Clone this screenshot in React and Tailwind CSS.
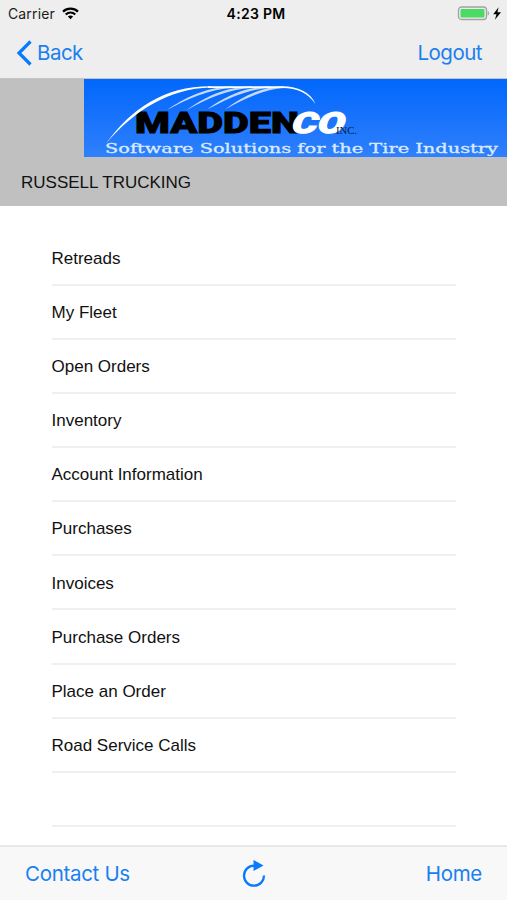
import React from 'react';

// menu entries, the last one is an empty row
const menuItems = [
  'Retreads',
  'My Fleet',
  'Open Orders',
  'Inventory',
  'Account Information',
  'Purchases',
  'Invoices',
  'Purchase Orders',
  'Place an Order',
  'Road Service Calls',
  '',
];

// Phone status bar: carrier, time and battery
const StatusBar = () => {
  return (
    <div className="grid h-[27px] grid-cols-3 items-center pl-2 pr-[5px] text-[14px] text-[#1c1c1c]">
      <div className="flex items-center">
        <span className="w-[47px] whitespace-nowrap tracking-[0.01em]">Carrier</span>
        <svg className="ml-[7px]" width="17" height="13" viewBox="0 0 17 13" fill="none" stroke="#000" strokeWidth="2.2">
          <path d="M1 4.6C5.2 .6 11.8 .6 16 4.6" />
          <path d="M3.7 7.5C6.5 5 10.5 5 13.3 7.5" />
          <path d="M5.9 9.5C7.4 8.2 9.6 8.2 11.1 9.5L8.5 12.2Z" fill="#000" stroke="none" />
        </svg>
      </div>
      <span className="justify-self-center whitespace-nowrap pl-[2px] font-semibold tracking-[0.02em] text-black">4:23 PM</span>
      <svg className="justify-self-end" width="45" height="15" viewBox="0 0 45 15">
        <rect x="1.5" y="1" width="28" height="12.5" rx="3" fill="none" stroke="#a3a3a3" strokeWidth="1.3" />
        <rect x="3.5" y="3" width="24" height="8.5" rx="1" fill="#4cd964" />
        <path d="M30.7 5c1.8.6 1.8 4 0 4.6Z" fill="#a3a3a3" />
        <path d="M41.6 1.2L36.2 8.2h3.3l-1.6 5.6L44 6.2h-3.6Z" fill="#000" />
      </svg>
    </div>
  );
};

// Company banner
const Logo = () => {
  return (
    <svg className="block" width="423" height="78" viewBox="84 79 423 78">
      <defs>
        <linearGradient id="sky" x1="0" y1="0" x2="0" y2="1">
          <stop offset="0" stopColor="#0068fc" />
          <stop offset="0.35" stopColor="#126ffc" />
          <stop offset="1" stopColor="#2f80fb" />
        </linearGradient>
      </defs>
      <rect x="84" y="79" width="423" height="78" fill="url(#sky)" />
      <text x="135" y="133.2" textLength="164" lengthAdjust="spacingAndGlyphs" fontFamily="Roboto" fontWeight="900" fontSize="29" fill="#000" stroke="#000" strokeWidth="0.9">MADDEN</text>
      {/* tire arcs */}
      <g fill="#fff">
        <path d="M106 143.5C131 109 164 86 211 86.2L211 87.6C168 88.5 133 112 106 143.5Z" />
        <path d="M167 110C184 98 207 86.5 233 86.2V88C210 89 187 99 167 110Z" opacity="0.75" />
        <path d="M186 110.5C203 98 225 86.5 252 86.2V88C229 89 206 99 186 110.5Z" opacity="0.75" />
        <path d="M207 109.5C224 97 244 86.5 270 86.2V88C248 89 227 99 207 109.5Z" opacity="0.75" />
        <path d="M225 109.5C242 97 261 86.5 284 86.2V88C266 89 245 98 225 109.5Z" opacity="0.75" />
        <path d="M208 86.3H282C299 86.3 311 93 315.5 104C308 93 298 88 282 87.9H208Z" />
      </g>
      <g transform="translate(291 133.3) skewX(-8)">
        <text x="0" y="0" textLength="53" lengthAdjust="spacingAndGlyphs" fontFamily="Roboto" fontWeight="900" fontStyle="italic" fontSize="29" fill="#fff" stroke="#fff" strokeWidth="1">CO</text>
      </g>
      <text x="336" y="133.7" textLength="21" lengthAdjust="spacingAndGlyphs" fontFamily="Liberation Serif" fontSize="10" fill="#0a1c40">INC.</text>
      <text x="105" y="153" textLength="393" lengthAdjust="spacingAndGlyphs" fontFamily="DejaVu Serif" fontSize="12.5" fill="#d9eaff" stroke="#d9eaff" strokeWidth="0.3">Software Solutions for the Tire Industry</text>
    </svg>
  );
};

const App = () => {
  return (
    <div className="flex h-[900px] w-[507px] flex-col overflow-hidden bg-white font-['Inter',sans-serif]">
      {/* top bar */}
      <header className="h-[79px] border-b border-[#c4c4c6] bg-[#eeeeee]">
        <StatusBar />
        <nav className="flex h-[51px] items-center justify-between pl-[16px] pr-[25px] pt-px text-[20.5px] tracking-[-0.025em] text-[#1a7ff0]">
          <button className="flex items-center gap-[5px]">
            <svg width="16" height="26" viewBox="0 0 16 26" fill="none" stroke="#087aff" strokeWidth="3.2">
              <path d="M14.5 1.5L3 13L14.5 24.5" />
            </svg>
            <span>Back</span>
          </button>
          <button>Logout</button>
        </nav>
      </header>

      {/* banner and customer name */}
      <section className="h-[127px] bg-[#c0c0c0] font-['Liberation_Sans',sans-serif]">
        <div className="flex justify-end">
          <Logo />
        </div>
        <h1 className="pl-[21px] pt-[13px] text-[17px] leading-[26px] text-[#111]">RUSSELL TRUCKING</h1>
      </section>

      {/* menu */}
      <main className="flex-1 pl-[51.5px] pr-[51px] pt-[25.4px] font-['Liberation_Sans',sans-serif]">
        <ul>
          {menuItems.map((item, i) => (
            <li key={i} className="flex h-[54.15px] items-center border-b-2 border-[#efeff0] pt-[2px] text-[17px] text-[#111]">
              {item}
            </li>
          ))}
        </ul>
      </main>

      {/* bottom bar */}
      <footer className="flex h-[55px] items-center justify-between border-t-2 border-[#e8e8e8] bg-[#f8f8f8] pl-[25px] pr-[25px] pt-px text-[20.5px] tracking-[-0.015em] text-[#1a7ff0]">
        <button className="w-[105px] whitespace-nowrap text-left">Contact Us</button>
        <svg className="ml-[112px] mr-auto" width="24" height="28" viewBox="0 0 24 28">
          <path d="M12 5.7A10 10 0 1 0 22 15.5" fill="none" stroke="#087aff" strokeWidth="2.3" />
          <path d="M11.5 0L21.5 5.4L11.5 11Z" fill="#087aff" />
        </svg>
        <button>Home</button>
      </footer>
    </div>
  );
};

export default App;
